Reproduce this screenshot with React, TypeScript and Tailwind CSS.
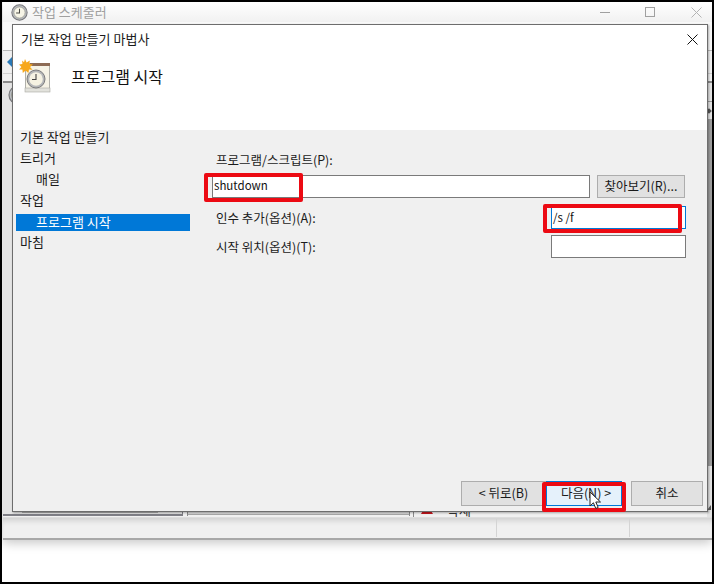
import React from 'react';

const font = { fontFamily: '"Noto Sans CJK KR", "Noto Sans", sans-serif' };

function ClockIcon({ size }: { size: number }) {
  return (
    <svg width={size} height={size} viewBox="0 0 20 20">
      <circle cx="10" cy="10" r="9" fill="#b9bcc0" stroke="#77777a" strokeWidth="1.2" />
      <circle cx="10" cy="10" r="6.6" fill="#f6f4e6" stroke="#8f8f88" strokeWidth="0.8" />
      <path d="M10 5.5V10.5H6" fill="none" stroke="#4a4a46" strokeWidth="1.2" />
    </svg>
  );
}

function WizardIcon() {
  return (
    <svg width="32" height="34" viewBox="0 0 32 34">
      <rect x="6.5" y="4.5" width="24" height="25" fill="#f6f3e6" stroke="#b0b0aa" />
      <rect x="6" y="29" width="25" height="4" fill="#e2e2dc" stroke="#a8a8a2" strokeWidth="0.6" />
      <rect x="11" y="4" width="20" height="3" fill="#8d6b55" />
      <circle cx="17" cy="20" r="9" fill="#b4b6b8" stroke="#7b7b7c" />
      <circle cx="17" cy="20" r="6.8" fill="#f5f2e2" />
      <path d="M17 15V20.5H13" fill="none" stroke="#444" strokeWidth="1.1" />
      <path d="M6 0L7.6 3.4L10.8 1.4L10.4 5L14 5.4L11 8L13.6 10.8L10 10.6L9.4 14L6.6 11.6L3.8 14L3.4 10.6L0 10.6L2.4 8L0 5.4L3.4 5L3.2 1.4L5 3.2Z" fill="#f7a81b" />
    </svg>
  );
}

function NavItem({ label, indent, selected }: { label: string; indent?: boolean; selected?: boolean }) {
  return (
    <div
      className={`flex items-center text-[13px] leading-none ${indent ? 'pl-[20px]' : 'pl-[4px]'} ${selected ? 'bg-[#0078d7] text-white h-[17px] mt-[4px] pb-[2px]' : 'h-[21px] text-[#1a1a1a]'}`}
    >
      {label}
    </div>
  );
}

function WizardButton({ label, className }: { label: string; className: string }) {
  return (
    <div className={`h-[25px] flex items-center justify-center text-[12.5px] leading-none text-[#1a1a1a] border ${className}`}>
      {label}
    </div>
  );
}

function Highlight({ className }: { className: string }) {
  return <div className={`absolute border-[4px] border-[#ec0a13] rounded-[2px] ${className}`} />;
}

export default function App() {
  return (
    <div className="relative w-[714px] h-[584px] bg-black p-[2px] overflow-hidden" style={font}>
      <div className="h-full bg-white flex flex-col">
        {/* Scheduler window behind the wizard */}
        <div className="h-[538px] ml-[1px] flex flex-col bg-[#f0f0f0] border-b-2 border-[#a8a8a8] shadow-[0_3px_10px_rgba(0,0,0,0.22)]">
          <div className="h-[20px] shrink-0 flex items-center bg-gradient-to-b from-white to-[#f1f1f1]">
            <div className="ml-[8px] flex">
              <ClockIcon size={17} />
            </div>
            <span className="ml-[4px] -mt-[2px] text-[13px] leading-none text-[#a0a0a0]">작업 스케줄러</span>
            <div className="ml-auto flex items-center">
              <div className="w-[10px] h-px bg-[#a0a0a0] mr-[35px]" />
              <div className="w-[10px] h-[10px] border border-[#a0a0a0] mr-[36px]" />
              <svg width="11" height="11" viewBox="0 0 11 11" className="mr-[10px]">
                <path d="M0.5 0.5L10.5 10.5M10.5 0.5L0.5 10.5" stroke="#b4b4b4" />
              </svg>
            </div>
          </div>
          <div className="h-[28px] shrink-0 bg-[#f8f8f8]" />
          <div className="h-[23px] shrink-0 border-t border-[#b8b8b8] flex items-center bg-[#f0f0f0]">
            <div className="w-0 h-0 border-y-[6px] border-y-transparent border-r-[6px] border-r-[#2a7ab8] ml-[4px]" />
          </div>
          <div className="h-[8px] shrink-0 border-t border-[#d0d0d0] bg-[#f0f0f0]" />
          <div className="flex-1 min-h-0 flex flex-col border-t-2 border-[#8a8a8a]">
            <div className="flex-1 min-h-0 flex">
              <div className="flex-1 min-w-0 flex">
                <div className="w-[180px] shrink-0 flex flex-col justify-between border-r border-b-2 border-[#7f7f86] mb-px bg-[#e4e4e4]">
                  <div className="ml-[5px] mt-[2px]">
                    <ClockIcon size={20} />
                  </div>
                  <div className="h-[3px] ml-[19px] mr-[24px] mb-px bg-[#a9a9a9]" />
                </div>
                <div className="w-[223px] shrink-0 ml-[4px] mb-px border-x border-[#8a8a8a] flex flex-col justify-end">
                  <div className="h-[4px] border-y border-[#a8a8a8] bg-[#d8d8d8] mb-px" />
                </div>
                <div className="flex-1 flex items-end overflow-hidden border-l border-[#8a8a8a] ml-[3px] h-full">
                  <div className="relative flex items-center h-[18px] mb-[3px] ml-[7px] text-[13px] leading-none text-[#333]">
                    <div className="w-0 h-0 border-x-[6px] border-x-transparent border-b-[10px] border-b-[#c4161c] mt-[8px]" />
                    <span className="ml-[14px] mt-[8px]">삭제</span>
                  </div>
                </div>
              </div>
              <div className="w-[5px] shrink-0 flex flex-col">
                <div className="h-[19px] border-b border-[#9a9a9a] bg-[#e2e2e2]" />
                <div className="h-[17px] bg-[#e2e2e2] flex items-center">
                  <div className="w-[4px] h-[4px] bg-[#555] rotate-45" />
                </div>
                <div className="flex-1 bg-[#9c9c9c]" />
                <div className="h-[51px] bg-[#e2e2e2]" />
              </div>
            </div>
            <div className="h-[21px] shrink-0 flex bg-[#f0f0f0] border-t border-[#dddddd] shadow-[inset_0_6px_6px_-4px_rgba(0,0,0,0.16)]">
              <div className="w-[494px] border-r border-[#d4d4d4] my-px" />
              <div className="w-[133px] border-r border-[#d4d4d4] my-px" />
            </div>
          </div>
        </div>
      </div>

      {/* Wizard dialog */}
      <div className="absolute left-[12px] top-[24px] w-[696px] h-[488px] flex flex-col bg-[#f0f0f0] border border-[#6d6d6d] shadow-[1px_1px_2px_rgba(0,0,0,0.3)]">
        <div className="h-[105px] bg-white shrink-0 flex flex-col">
          <div className="h-[28px] flex items-center pl-[8px] pr-[9px] text-[13px] leading-none text-[#1a1a1a]">
            <span className="-mt-[2px]">기본 작업 만들기 마법사</span>
            <svg width="11" height="11" viewBox="0 0 11 11" className="ml-auto">
              <path d="M0.5 0.5L10.5 10.5M10.5 0.5L0.5 10.5" stroke="#111" />
            </svg>
          </div>
          <div className="flex items-start pl-[6px] mt-[6px]">
            <WizardIcon />
            <span className="ml-[20px] mt-[6px] text-[16px] leading-[22px] text-[#111]">프로그램 시작</span>
          </div>
        </div>

        <div className="flex-1 flex min-h-0">
          <div className="w-[177px] pl-[3px] shrink-0 -mt-[4px]">
            <NavItem label="기본 작업 만들기" />
            <NavItem label="트리거" />
            <NavItem label="매일" indent />
            <NavItem label="작업" />
            <NavItem label="프로그램 시작" indent selected />
            <NavItem label="마침" />
          </div>
          <div className="flex-1 flex flex-col text-[12.5px] leading-none text-[#1a1a1a] pl-[26px] pr-[22px] pt-[23px]">
            <div className="h-[15px] flex items-center">프로그램/스크립트(P):</div>
            <div className="flex items-center gap-[7px] mt-[6px]">
              <div className="flex-1 h-[23px] bg-white border border-[#7a7a7a] flex items-center pl-[1px] -ml-[4px] text-[11.5px] text-[#111]">
                shutdown
              </div>
              <div className="w-[88px] h-[23px] bg-[#e1e1e1] border border-[#adadad] flex items-center justify-center mt-[1px]">
                찾아보기(R)...
              </div>
            </div>
            <div className="flex items-center justify-between mt-[8px] -mr-[1px]">
              <span className="mt-[2px]">인수 추가(옵션)(A):</span>
              <div className="w-[135px] h-[23px] bg-white border border-[#0078d7] flex items-center pl-[1px] text-[11.5px] text-[#111]">
                /s /f
              </div>
            </div>
            <div className="flex items-center justify-between mt-[6px] -mr-[1px]">
              <span className="mt-[2px]">시작 위치(옵션)(T):</span>
              <div className="w-[135px] h-[23px] bg-white border border-[#7a7a7a]" />
            </div>
            <div className="mt-auto mb-[5px] -mr-[18px] flex justify-end items-center">
              <WizardButton label="< 뒤로(B)" className="w-[85px] bg-[#e1e1e1] border-[#adadad]" />
              <WizardButton label="다음(N) >" className="w-[76px] pl-[4px] bg-[#e5f1fb] border-[#0078d7]" />
              <WizardButton label="취소" className="w-[72px] ml-[9px] bg-[#e1e1e1] border-[#adadad]" />
            </div>
          </div>
        </div>
      </div>

      {/* Resize grip of the dialog */}
      <svg width="5" height="6" viewBox="0 0 5 6" className="absolute left-[707px] top-[505px]">
        <path d="M4 0V5H0Z" fill="#555" />
      </svg>

      {/* Red marks on top of the screenshot */}
      <Highlight className="left-[204px] top-[173px] w-[99px] h-[29px]" />
      <Highlight className="left-[543px] top-[204px] w-[139px] h-[29px]" />
      <Highlight className="left-[542px] top-[482px] w-[84px] h-[30px]" />

      {/* Mouse pointer */}
      <svg width="13" height="19" viewBox="0 0 13 19" className="absolute left-[589px] top-[491px]">
        <path d="M1 1V15L4.4 11.8L6.8 17.5L9.2 16.4L6.8 11H11.5Z" fill="#fff" stroke="#222" strokeWidth="1" />
      </svg>
    </div>
  );
}
